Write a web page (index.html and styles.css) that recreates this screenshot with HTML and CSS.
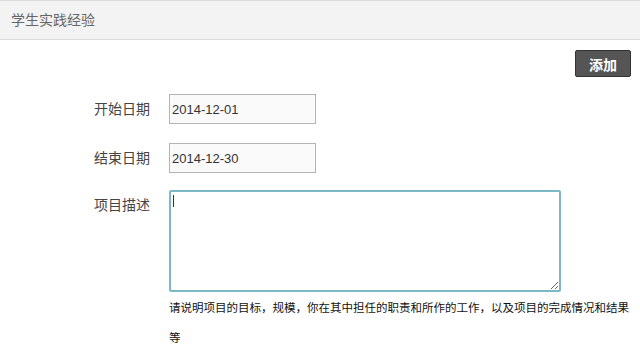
FILE: index.html
```html
<html>
<head>
  <meta charset="utf-8">
  <link rel="stylesheet" href="styles.css">
</head>
<body>
  <!-- Section header -->
  <div class="panel-header">学生实践经验</div>

  <!-- Toolbar -->
  <div class="toolbar">
    <button class="add-button">添加</button>
  </div>

  <!-- Practice form -->
  <form class="practice-form">
    <label class="form-label" for="startDate">开始日期</label>
    <div class="form-field">
      <input type="text" id="startDate" class="date-input" value="2014-12-01">
    </div>

    <label class="form-label" for="endDate">结束日期</label>
    <div class="form-field">
      <input type="text" id="endDate" class="date-input" value="2014-12-30">
    </div>

    <label class="form-label" for="projectDesc">项目描述</label>
    <div class="form-field">
      <div class="textarea-wrap">
        <textarea id="projectDesc" class="desc-input"></textarea>
        <span class="caret"></span>
      </div>
      <p class="help-text">请说明项目的目标，规模，你在其中担任的职责和所作的工作，以及项目的完成情况和结果等</p>
    </div>
  </form>
</body>
</html>
```

FILE: styles.css
```css
/* General styling */
body {
  margin: 0;
  background-color: #fff;
  font-family: 'Liberation Sans', 'Noto Sans CJK SC', sans-serif;
  color: #333;
}

/* Header bar */
.panel-header {
  height: 38px;
  line-height: 38px;
  padding-left: 11px;
  background-color: #f3f3f3;
  border-top: 1px solid #dcdcdc;
  border-bottom: 1px solid #dcdcdc;
  font-size: 14px;
  color: #666;
}

/* Toolbar with add button */
.toolbar {
  display: flex;
  justify-content: flex-end;
  padding: 10px 9px 0 0;
}

.add-button {
  width: 56px;
  height: 27px;
  padding: 0;
  background-color: #555;
  border: 1px solid #333;
  border-radius: 2px;
  color: #fff;
  font-family: 'Noto Sans CJK SC', sans-serif;
  font-size: 14px;
  font-weight: bold;
  cursor: pointer;
}

/* Form layout */
.practice-form {
  display: grid;
  grid-template-columns: 150px 464px;
  column-gap: 19px;
  margin: 17px 0 0 0;
}

.form-label {
  line-height: 28px;
  text-align: right;
  font-family: 'Noto Sans CJK SC', sans-serif;
  font-size: 14px;
  color: #444;
}

.form-field {
  margin-bottom: 19px;
}

.form-field:nth-of-type(2) {
  margin-bottom: 17px;
}

.date-input {
  display: block;
  box-sizing: border-box;
  width: 147px;
  height: 30px;
  padding: 0 2px;
  background-color: #fafafa;
  border: 1px solid #b4b4b4;
  font-family: 'Liberation Sans', sans-serif;
  font-size: 13px;
  color: #333;
  outline: none;
}

.textarea-wrap {
  position: relative;
  width: 392px;
}

.desc-input {
  display: block;
  box-sizing: border-box;
  width: 392px;
  height: 102px;
  margin: 0;
  border: 2px solid #7db8c6;
  border-radius: 2px;
  background-color: #fff;
  outline: none;
  resize: both;
}

.caret {
  position: absolute;
  top: 5px;
  left: 4px;
  width: 1px;
  height: 12px;
  background-color: #333;
}

.help-text {
  margin: 0;
  width: 464px;
  line-height: 30px;
  font-family: 'Noto Sans CJK SC', sans-serif;
  font-size: 11.5px;
  color: #111;
}
```
